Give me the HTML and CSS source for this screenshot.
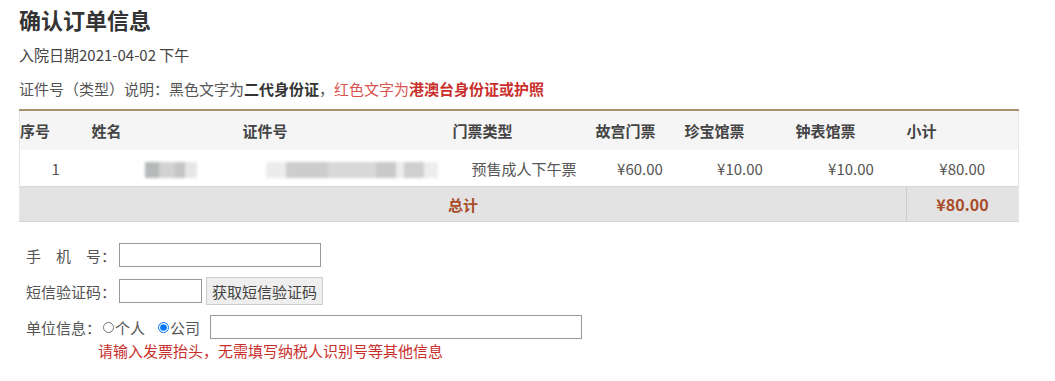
FILE: index.html
```html
<!DOCTYPE html>
<html lang="zh-CN">
<head>
  <meta charset="UTF-8">
  <title>确认订单信息</title>
  <link rel="stylesheet" href="styles.css">
</head>
<body>
  <div class="page">
    <h2 class="title">确认订单信息</h2>
    <p class="visit">入院日期2021-04-02 下午</p>
    <p class="note">证件号（类型）说明：黑色文字为<b>二代身份证</b>，<span class="red">红色文字为<b>港澳台身份证或护照</b></span></p>

    <table class="order">
      <colgroup>
        <col style="width:72px"><col style="width:151px"><col style="width:210px"><col style="width:143px">
        <col style="width:89px"><col style="width:111px"><col style="width:111px"><col style="width:112px">
      </colgroup>
      <thead>
        <tr>
          <th>序号</th><th>姓名</th><th>证件号</th><th>门票类型</th>
          <th>故宫门票</th><th>珍宝馆票</th><th>钟表馆票</th><th>小计</th>
        </tr>
      </thead>
      <tbody>
        <tr class="row">
          <td>1</td>
          <td><span class="mask mask-name"></span></td>
          <td><span class="mask mask-id"></span></td>
          <td>预售成人下午票</td>
          <td>¥60.00</td>
          <td>¥10.00</td>
          <td>¥10.00</td>
          <td>¥80.00</td>
        </tr>
        <tr class="total">
          <td colspan="7">总计</td>
          <td class="sum">¥80.00</td>
        </tr>
      </tbody>
    </table>

    <div class="form">
      <div class="field">
        <label class="lbl"><span class="spread">手机号</span>：</label>
        <input type="text" class="ipt ipt-phone">
      </div>
      <div class="field">
        <label class="lbl"><span class="spread">短信验证码</span>：</label>
        <input type="text" class="ipt ipt-code">
        <button class="btn">获取短信验证码</button>
      </div>
      <div class="field field-unit">
        <label class="lbl-unit">单位信息：</label>
        <label class="opt opt-person"><input type="radio" name="unit">个人</label>
        <label class="opt"><input type="radio" name="unit" checked>公司</label>
        <input type="text" class="ipt ipt-unit">
      </div>
      <p class="hint">请输入发票抬头，无需填写纳税人识别号等其他信息</p>
    </div>
  </div>
</body>
</html>
```

FILE: styles.css
```css
body { margin: 0; background: #fff; font-family: "Noto Sans CJK SC", "Noto Sans", sans-serif; font-size: 15px; color: #555; }
.page { padding: 4px 0 0 19px; width: 999px; }
.title { margin: 0; font-size: 22px; line-height: 30px; color: #333; font-weight: bold; }
.visit { margin: 11px 0 0; line-height: 20px; color: #444; }
.note { margin: 14px 0 0; line-height: 20px; color: #555; }
.note b { font-weight: bold; color: #333; }
.note .red { color: #d9534f; }
.note .red b { color: #c9302c; }

.order { margin-top: 10px; width: 999px; border-collapse: collapse; table-layout: fixed; border-top: 2px solid #a8916f; border-left: 1px solid #e6e6e6; border-right: 1px solid #e6e6e6; }
.order th { height: 39px; padding: 0; text-align: left; font-weight: bold; color: #444; background: #f5f5f5; }
.order td { padding: 0; text-align: center; color: #555; }
.row td { height: 36px; background: #fff; border-bottom: 1px solid #d9d9d9; }
.total td { height: 34px; background: #e3e3e3; border-bottom: 1px solid #d4d4d4; color: #a94c2a; font-weight: bold; }
.total .sum { border-left: 1px solid #ccc; font-size: 16px; }

.mask { display: inline-block; vertical-align: middle; filter: blur(1.5px); }
.mask-name { width: 52px; height: 16px; margin-left: 8px; background: linear-gradient(90deg, #b5b9b9 0 14px, #d2d2d2 14px 30px, #c4c4c4 30px 40px, #e6e6e6 40px); }
.mask-id { width: 172px; height: 16px; margin-left: 8px; background: linear-gradient(90deg, #ececec 0 20px, #cdcdcd 20px 62px, #d8d8d8 62px 110px, #c9c9c9 110px 130px, #ececec 130px 138px, #cfcfcf 138px 158px, #ededed 158px); }

.form { padding: 15px 0 0 7px; }
.field { display: flex; align-items: center; height: 36px; }
.lbl { display: flex; width: 93px; color: #555; }
.spread { width: 75px; text-align-last: justify; }
.ipt { height: 24px; box-sizing: border-box; border: 1px solid #999; padding: 0 4px; font-size: 15px; }
.ipt-phone { width: 202px; }
.ipt-code { width: 83px; }
.btn { margin-left: 4px; height: 28px; padding: 0 5px; border: 1px solid #ccc; background: #eee; color: #444; font-family: inherit; font-size: 15px; }
.field-unit { height: 30px; margin-top: 3px; }
.lbl-unit { width: 77px; }
.opt { display: flex; align-items: center; color: #555; }
.opt-person { margin-right: 13px; }
.opt input { width: 11px; height: 11px; margin: 0 1px 0 0; }
.ipt-unit { width: 372px; margin-left: 10px; }
.hint { margin: 0 0 0 72px; line-height: 18px; color: #c9302c; }
```
